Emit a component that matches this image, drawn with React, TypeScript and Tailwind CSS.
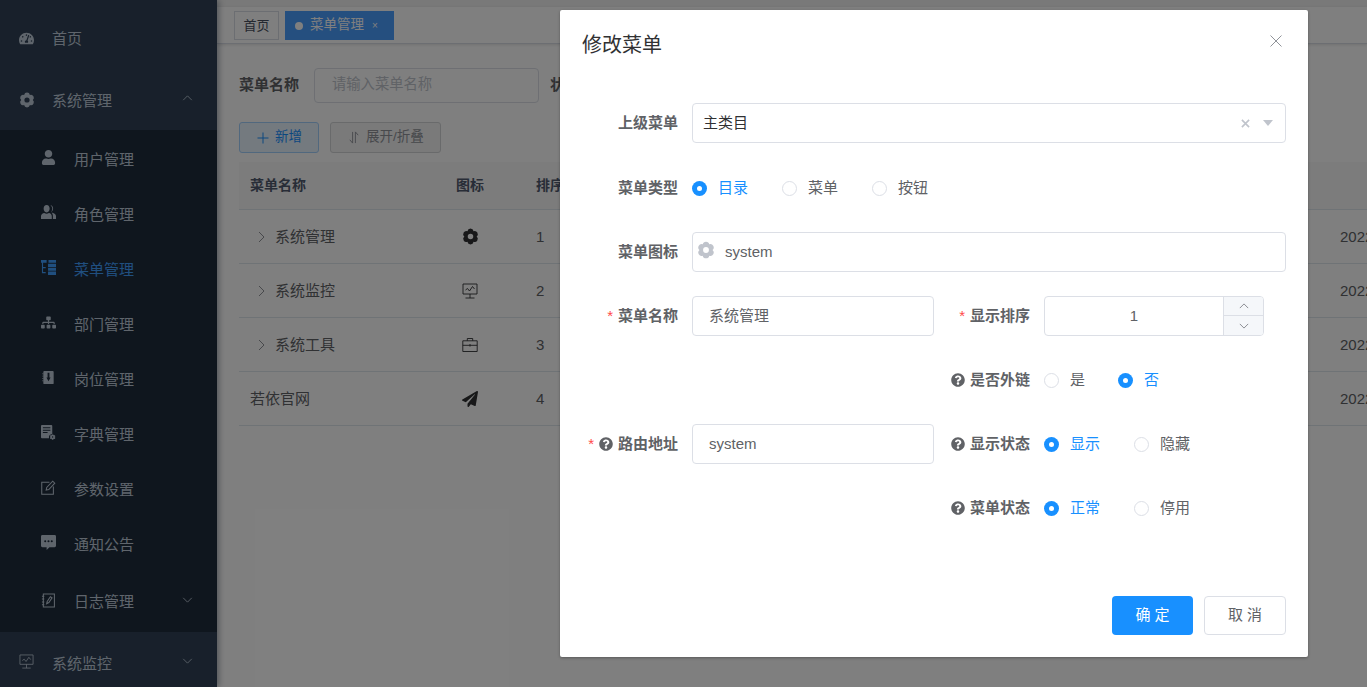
import React from "react";
import { FaTachometerAlt, FaUser, FaSitemap, FaPaperPlane, FaQuestionCircle } from "react-icons/fa";

const Gear = ({ className = "" }: { className?: string }) => (
  <svg viewBox="0 0 16 16" className={className} fill="currentColor">
    <path fillRule="evenodd" d="M13.800 8A2.950 2.950 0 0 1 10.900 13.020A2.950 2.950 0 0 1 5.100 13.020A2.950 2.950 0 0 1 2.200 8A2.950 2.950 0 0 1 5.100 2.980A2.950 2.950 0 0 1 10.900 2.980A2.950 2.950 0 0 1 13.800 8ZM8 5.400a2.600 2.600 0 1 0 0 5.200a2.600 2.600 0 1 0 0-5.200z" />
  </svg>
);
const Peoples = ({ className = "" }: { className?: string }) => (
  <svg viewBox="0 0 16 16" className={className} fill="currentColor">
    <path d="M6 0c2 0 3.200 1.600 3.200 3.800S8 8 6 8 2.800 6 2.800 3.800 4 0 6 0zM0 15v-3.300c0-1.700 1.800-2.900 3.500-3.200 1.500 1 3.500 1 5 0 1.500.3 3 1.500 3 3.200V15z" />
    <path d="M10 .3c1.800.2 2.900 1.700 2.900 3.500 0 1.900-1 3.300-2.400 3.700 1-.9 1.500-2.300 1.500-3.700S11.300 1.100 10 .3zM11.200 8c2.400.6 4.800 1.700 4.800 3.700V15h-3.300v-3.300c0-1.500-.6-2.800-1.500-3.700z" />
  </svg>
);
const TreeTable = ({ className = "" }: { className?: string }) => (
  <svg viewBox="0 0 16 16" className={className} fill="currentColor">
    <path d="M0 0h6v3H0zM1 3h1.200v11H1zM1 7.500h4v1.200H1zM1 12.800h4V14H1zM8 0h8v3H8zM7.500 4h8.500v3.500H7.500zM7.500 8.300H16v3.200H7.500zM7.500 12.300H16V16H7.500z" />
  </svg>
);
const Post = ({ className = "" }: { className?: string }) => (
  <svg viewBox="0 0 16 16" className={className} fill="currentColor">
    <path fillRule="evenodd" d="M3.500 1h9a1 1 0 0 1 1 1v12a1 1 0 0 1-1 1h-9a1 1 0 0 1-1-1V2a1 1 0 0 1 1-1zM7 3v5H5.800L8 12l2.200-4H9V3z" />
    <path d="M1.500 3.500h1v1h-1zM1.500 6h1v1h-1zM1.500 8.500h1v1h-1zM1.500 11h1v1h-1z" />
  </svg>
);
const Dict = ({ className = "" }: { className?: string }) => (
  <svg viewBox="0 0 16 16" className={className} fill="currentColor">
    <path fillRule="evenodd" d="M0 1a1 1 0 0 1 1-1h10a1 1 0 0 1 1 1v8.500A4 4 0 0 0 8.500 14H1a1 1 0 0 1-1-1zM2 2.500v1h8v-1zM2 5v1h8V5zM2 7.500v1h5v-1z" />
    <path fillRule="evenodd" d="M13 10l.6 1 1.200-.2.500 1.100-.8.900.8.900-.5 1.100-1.200-.2-.6 1h-1.200l-.6-1-1.200.2-.5-1.100.8-.9-.8-.9.5-1.100 1.200.2.600-1zM12.400 12a.800.800 0 1 0 0 1.600.800.800 0 0 0 0-1.600z" />
  </svg>
);
const EditIcon = ({ className = "" }: { className?: string }) => (
  <svg viewBox="0 0 16 16" className={className} fill="none" stroke="currentColor" strokeWidth="1.100">
    <path d="M9 2.500H.8v12.700h12.400V7" />
    <path d="M5.500 10.800l.6-2.800 6.400-6.800 2.200 2.200-6.400 6.800z" />
  </svg>
);
const Message = ({ className = "" }: { className?: string }) => (
  <svg viewBox="0 0 16 16" className={className} fill="currentColor">
    <path fillRule="evenodd" d="M1.500 0h13A1.500 1.500 0 0 1 16 1.500v10a1.500 1.500 0 0 1-1.500 1.500H9l-3 3v-3H1.500A1.500 1.500 0 0 1 0 11.500v-10A1.500 1.500 0 0 1 1.500 0zM4.500 5.500a1.100 1.100 0 1 0 0 2.200 1.100 1.100 0 0 0 0-2.200zm3.500 0a1.100 1.100 0 1 0 0 2.200 1.100 1.100 0 0 0 0-2.200zm3.500 0a1.100 1.100 0 1 0 0 2.200 1.100 1.100 0 0 0 0-2.200z" />
  </svg>
);
const LogIcon = ({ className = "" }: { className?: string }) => (
  <svg viewBox="0 0 16 16" className={className} fill="none" stroke="currentColor" strokeWidth="1.100">
    <path d="M2.500 1h11.800v14H2.500z" />
    <path d="M1 3.500h2.500M1 6.500h2.500M1 9.500h2.500M1 12.500h2.500" />
    <path d="M6 11.500l.6-2.500 3.400-5 1.800 1.200-3.400 5z" />
  </svg>
);
const Monitor = ({ className = "" }: { className?: string }) => (
  <svg viewBox="0 0 16 16" className={className} fill="none" stroke="currentColor" strokeWidth="0.900">
    <path d="M1 1h14v10H1zM8 11v4M3.500 15h9" />
    <path d="M3.500 7l2-1.500L7.500 8l3-4.500L12.500 6" />
  </svg>
);
const Tool = ({ className = "" }: { className?: string }) => (
  <svg viewBox="0 0 16 16" className={className} fill="none" stroke="currentColor" strokeWidth="0.900">
    <path d="M.8 3.800h14.400v10.700H.8zM5.300 3.800V1.500h5.400v2.300M.8 8.300h14.400M8 7v2.600" />
  </svg>
);
const Chevron = ({ up = false, className = "" }: { up?: boolean; className?: string }) => (
  <svg viewBox="0 0 12 7" className={className} fill="none" stroke="currentColor" strokeWidth="1">
    <path d={up ? "M1 6l5-5 5 5" : "M1 1l5 5 5-5"} />
  </svg>
);
const ChevronRight = () => (
  <svg viewBox="0 0 7 12" className="w-[7px] h-[12px] text-[#909399]" fill="none" stroke="currentColor" strokeWidth="1">
    <path d="M1 1l5 5-5 5" />
  </svg>
);
const Help = () => <FaQuestionCircle className="w-[14px] h-[14px] text-[#606266] shrink-0" />;

const subs: [React.ReactNode, string, boolean?][] = [
  [<FaUser className="w-[15px] h-[15px]" />, "用户管理"],
  [<Peoples className="w-[15px] h-[15px]" />, "角色管理"],
  [<TreeTable className="w-[15px] h-[15px]" />, "菜单管理", true],
  [<FaSitemap className="w-[15px] h-[15px]" />, "部门管理"],
  [<Post className="w-[15px] h-[15px]" />, "岗位管理"],
  [<Dict className="w-[15px] h-[15px]" />, "字典管理"],
  [<EditIcon className="w-[15px] h-[15px]" />, "参数设置"],
  [<Message className="w-[15px] h-[15px]" />, "通知公告"],
];

const Sidebar = () => (
  <aside className="w-[217px] shrink-0 h-[687px] overflow-hidden bg-[#304156] text-[#bfcbd9] text-[15px] shadow-[2px_0_6px_rgba(0,21,41,0.35)] z-10">
    <div className="h-[60px] mt-2 mb-[2px] flex items-center pl-[19px]">
      <FaTachometerAlt className="w-[15px] h-[15px] mr-[18px]" />
      <span className="mt-[2px]">首页</span>
    </div>
    <div className="h-[60px] flex items-center pl-[19px] pr-6">
      <Gear className="w-[16px] h-[16px] mr-[17px]" />
      <span className="mt-[2px]">系统管理</span>
      <Chevron up className="w-[11px] h-[6px] ml-auto -mt-1" />
    </div>
    <div className="bg-[#1f2d3d] pt-[2px]">
      {subs.map(([icon, text, active]) => (
        <div key={text} className={`h-[55px] flex items-center pl-[41px] ${active ? "text-[#409eff]" : ""}`}>
          <span className="w-[33px] -mt-1 shrink-0">{icon}</span>
          <span className="mt-[2px]">{text}</span>
        </div>
      ))}
      <div className="h-[60px] flex items-center pl-[41px] pr-6">
        <LogIcon className="w-[15px] h-[15px] mr-[18px] -mt-1" />
        <span>日志管理</span>
        <Chevron className="w-[11px] h-[6px] ml-auto -mt-1" />
      </div>
    </div>
    <div className="h-[62px] flex items-center pl-[19px] pr-6">
      <Monitor className="w-[15px] h-[15px] mr-[18px] -mt-1" />
      <span className="mt-[2px]">系统监控</span>
      <Chevron className="w-[11px] h-[6px] ml-auto -mt-1" />
    </div>
  </aside>
);

const rows: [string, React.ReactNode, number][] = [
  ["系统管理", <Gear className="w-[17px] h-[17px] text-[#303133]" />, 1],
  ["系统监控", <Monitor className="w-4 h-4 text-[#303133]" />, 2],
  ["系统工具", <Tool className="w-4 h-4 text-[#303133]" />, 3],
  ["若依官网", <FaPaperPlane className="w-4 h-4 text-[#303133]" />, 4],
];

const Main = () => (
  <main className="flex-1 min-w-0 h-[687px] overflow-hidden bg-white text-[15px] text-[#606266]">
    <div className="h-[7px] bg-[#f2f2f2]" />
    <div className="h-[37px] bg-white border-b border-[#d8dce5] shadow-[0_1px_3px_rgba(0,0,0,0.12)] flex items-start pt-1 pl-[17px] text-[13px]">
      <div className="h-[29px] w-[45px] border border-[#d8dce5] text-[#495060] flex items-center justify-center">首页</div>
      <div className="h-[29px] w-[109px] ml-[6px] bg-[#4a9eff] text-white flex items-center pl-[10px]">
        <span className="w-2 h-2 rounded-full bg-white mr-[7px]" />
        <span className="text-[13.500px]">菜单管理</span>
        <span className="ml-[8px] text-[10px]">×</span>
      </div>
    </div>
    <div className="pl-[22px] pt-[23px] w-[1150px]">
      <div className="flex items-center h-[36px]">
        <span className="w-[75px] font-bold text-[#606266]">菜单名称</span>
        <div className="w-[225px] h-[35px] border border-[#dcdfe6] rounded-[4px] flex items-center pl-[17px] text-[#c0c4cc] text-[14.300px]">请输入菜单名称</div>
        <span className="ml-[11px] font-bold">状态</span>
      </div>
      <div className="flex mt-[19px] text-[13.500px]">
        <div className="w-[80px] h-[31px] rounded-[3px] border border-[#a3d0fd] bg-[#e8f4ff] text-[#1890ff] flex items-center pl-[17px] gap-[6px]">
          <svg viewBox="0 0 12 12" className="w-[12px] h-[12px]" fill="none" stroke="currentColor" strokeWidth="1"><path d="M6 .5v11M.5 6h11" /></svg>
          <span>新增</span>
        </div>
        <div className="w-[111px] h-[31px] ml-[11px] rounded-[3px] border border-[#d3d4d6] bg-[#f4f4f5] text-[#909399] flex items-center pl-[17px] gap-[6px]">
          <svg viewBox="0 0 12 14" className="w-[12px] h-[13px]" fill="none" stroke="currentColor" strokeWidth="1"><path d="M4.500 1v12L1.500 9.500M7.500 13V1l3 3.500" /></svg>
          <span>展开/折叠</span>
        </div>
      </div>
      <div className="mt-[9px]">
        <div className="h-[48px] bg-[#f8f8f9] border-b border-[#dfe6ec] flex items-center font-bold text-[14px] text-[#515a6e] pl-[11px]">
          <span className="w-[206px]">菜单名称</span>
          <span className="w-[80px]">图标</span>
          <span>排序</span>
        </div>
        {rows.map(([name, icon, order], i) => (
          <div key={name} className="h-[54px] border-b border-[#dfe6ec] flex items-center pl-[11px]">
            <div className="w-[212px] shrink-0 flex items-center">
              {i < 3 && <span className="ml-2 mr-[10px] flex"><ChevronRight /></span>}
              <span className="mt-[2px]">{name}</span>
            </div>
            <span className="w-[74px] shrink-0 flex">{icon}</span>
            <span className="w-[804px] shrink-0 mt-[2px]">{order}</span>
            <span className="whitespace-nowrap shrink-0 mt-[2px]">2022-01-01</span>
          </div>
        ))}
      </div>
    </div>
  </main>
);

const Radio = ({ label, on = false, width }: { label: string; on?: boolean; width: string }) => (
  <div className={`flex items-center ${width} ${on ? "text-[#1890ff]" : "text-[#606266]"}`}>
    {on ? (
      <span className="w-[15px] h-[15px] rounded-full bg-[#1890ff] flex items-center justify-center shrink-0">
        <span className="w-[5px] h-[5px] rounded-full bg-white" />
      </span>
    ) : (
      <span className="w-[15px] h-[15px] rounded-full border border-[#dcdfe6] bg-white shrink-0" />
    )}
    <span className="ml-[11px]">{label}</span>
  </div>
);

const Label = ({ text, req = false, help = false }: { text: string; req?: boolean; help?: boolean }) => (
  <div className="w-[96px] shrink-0 flex items-center justify-end font-bold text-[#606266] whitespace-nowrap">
    {req && <span className="text-[#ff4949] font-normal mr-[5px]">*</span>}
    {help && <span className="mr-[5px] flex"><Help /></span>}
    <span>{text}</span>
  </div>
);

const inputBox = "h-10 border border-[#dcdfe6] rounded-[4px] flex items-center bg-white";

const Dialog = () => (
  <div className="absolute left-[560px] top-[10px] w-[748px] h-[647px] bg-white rounded-[2px] shadow-[0_1px_3px_rgba(0,0,0,0.3)] flex flex-col text-[15px] text-[#606266] px-[22px]">
    <div className="h-[93px] shrink-0 flex items-start justify-between pt-[21px]">
      <span className="text-[20px] leading-[28px] text-[#303133]">修改菜单</span>
      <svg viewBox="0 0 12 12" className="w-[12px] h-[12px] mt-[4px] mr-[4px] text-[#909399]" fill="none" stroke="currentColor" strokeWidth="1"><path d="M.5.500l11 11M11.500.500l-11 11" /></svg>
    </div>
    <div className="flex gap-[14px] h-10 mb-[25px]">
      <Label text="上级菜单" />
      <div className={`${inputBox} flex-1 pl-[10px] pr-[12px] text-[#303133]`}>
        <span>主类目</span>
        <svg viewBox="0 0 10 10" className="w-[9px] h-[9px] ml-auto text-[#c0c4cc]" fill="none" stroke="currentColor" strokeWidth="1.800"><path d="M1 1l8 8M9 1l-8 8" /></svg>
        <span className="ml-[13px] w-0 h-0 border-l-[5.500px] border-r-[5.500px] border-t-[6px] border-l-transparent border-r-transparent border-t-[#c0c4cc]" />
      </div>
    </div>
    <div className="flex gap-[14px] h-10 mb-6 items-center">
      <Label text="菜单类型" />
      <div className="flex">
        <Radio label="目录" on width="w-[90px]" />
        <Radio label="菜单" width="w-[90px]" />
        <Radio label="按钮" width="w-[90px]" />
      </div>
    </div>
    <div className="flex gap-[14px] h-10 mb-6">
      <Label text="菜单图标" />
      <div className={`${inputBox} flex-1 pl-1`}>
        <Gear className="w-[18px] h-[18px] -mt-1 text-[#c0c4cc]" />
        <span className="ml-[10px]">system</span>
      </div>
    </div>
    <div className="grid grid-cols-[352px_352px] gap-y-6">
      <div className="flex gap-[14px] h-10">
        <Label text="菜单名称" req />
        <div className={`${inputBox} w-[242px] pl-4 pt-[1px]`}>系统管理</div>
      </div>
      <div className="flex gap-[14px] h-10">
        <Label text="显示排序" req />
        <div className="h-10 w-[220px] border border-[#dcdfe6] rounded-[4px] flex overflow-hidden">
          <div className="flex-1 flex items-center justify-center">1</div>
          <div className="w-[40px] bg-[#f5f7fa] border-l border-[#dcdfe6] flex flex-col text-[#777a80]">
            <div className="h-1/2 border-b border-[#dcdfe6] flex items-center justify-center"><Chevron up className="w-[10px] h-[6px]" /></div>
            <div className="h-1/2 flex items-center justify-center"><Chevron className="w-[10px] h-[6px]" /></div>
          </div>
        </div>
      </div>
      <div />
      <div className="flex gap-[14px] h-10 items-center">
        <Label text="是否外链" help />
        <div className="flex">
          <Radio label="是" width="w-[74px]" />
          <Radio label="否" on width="w-[74px]" />
        </div>
      </div>
      <div className="flex gap-[14px] h-10">
        <Label text="路由地址" req help />
        <div className={`${inputBox} w-[242px] pl-4`}>system</div>
      </div>
      <div className="flex gap-[14px] h-10 items-center">
        <Label text="显示状态" help />
        <div className="flex">
          <Radio label="显示" on width="w-[90px]" />
          <Radio label="隐藏" width="w-[90px]" />
        </div>
      </div>
      <div />
      <div className="flex gap-[14px] h-10 items-center">
        <Label text="菜单状态" help />
        <div className="flex">
          <Radio label="正常" on width="w-[90px]" />
          <Radio label="停用" width="w-[90px]" />
        </div>
      </div>
    </div>
    <div className="mt-auto mb-[22px] flex justify-end gap-[11px]">
      <div className="w-[81px] h-[39px] rounded-[4px] bg-[#1890ff] text-white flex items-center justify-center">确 定</div>
      <div className="w-[82px] h-[39px] rounded-[4px] border border-[#dcdfe6] flex items-center justify-center">取 消</div>
    </div>
  </div>
);

export default function App() {
  return (
    <div className="relative w-[1367px] h-[687px] overflow-hidden flex font-['Liberation_Sans','Noto_Sans_CJK_SC',sans-serif]">
      <Sidebar />
      <Main />
      <div className="absolute inset-0 bg-black/50 z-20" />
      <div className="absolute inset-0 z-30">
        <Dialog />
      </div>
    </div>
  );
}
